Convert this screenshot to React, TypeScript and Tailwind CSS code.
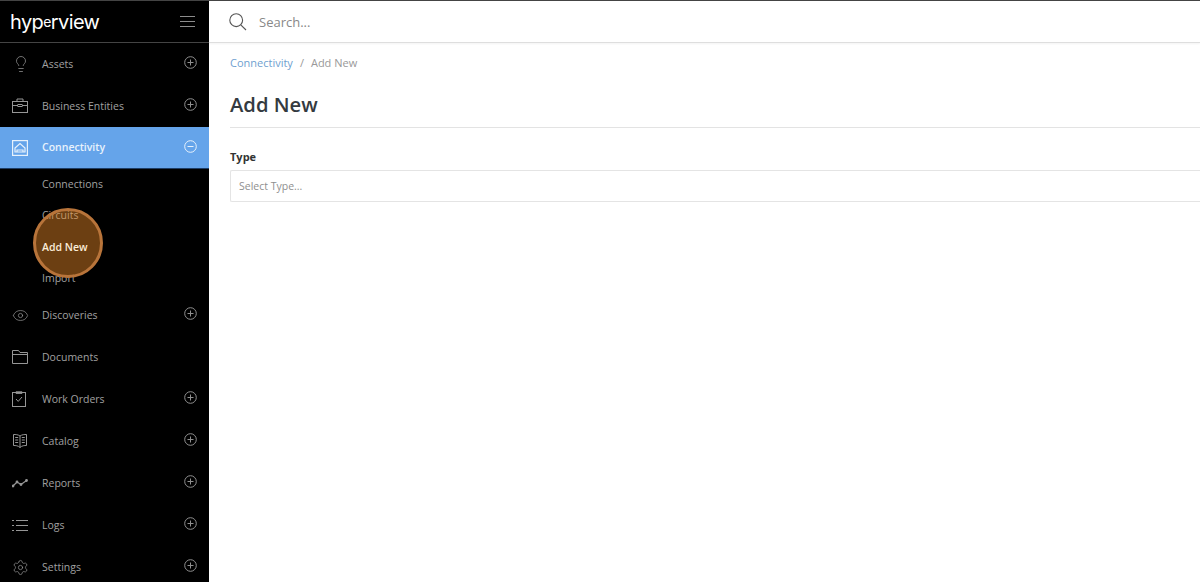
import * as React from "react";
import { Lightbulb, Eye, Settings } from "lucide-react";

const PlusCircle = ({ minus = false }: { minus?: boolean }) => (
  <svg width="13" height="13" viewBox="0 0 13 13" fill="none" stroke="currentColor" strokeWidth="1">
    <circle cx="6.5" cy="6.5" r="5.8" />
    <path d="M3.5 6.5h6" />
    {!minus && <path d="M6.5 3.500v6" />}
  </svg>
);

const Hamburger = () => (
  <svg width="15" height="11" viewBox="0 0 15 11" fill="none" stroke="#8c8c8c" strokeWidth="1">
    <path d="M0 0.500h15M0 5.500h15M0 10.500h15" />
  </svg>
);

const Briefcase = () => (
  <svg width="16" height="16" viewBox="0 0 16 16" fill="none" stroke="currentColor" strokeWidth="1">
    <rect x="0.5" y="3.5" width="15" height="11" />
    <path d="M5 3.5V1h6v2.5M0.5 7.500H6M10 7.500h5.500" />
    <rect x="6" y="6.500" width="4" height="2" />
  </svg>
);

const Network = () => (
  <svg width="16" height="16" viewBox="0 0 16 16" fill="none" stroke="currentColor" strokeWidth="1.2">
    <rect x="0.6" y="0.6" width="14.8" height="14.8" />
    <path d="M3 12V8l5-4.500L13 8v4z" />
    <path d="M5 12v-2h6v2" />
  </svg>
);

const FolderIcon = () => (
  <svg width="16" height="14" viewBox="0 0 16 14" fill="none" stroke="currentColor" strokeWidth="1">
    <path d="M0.500 13.500V0.500h6l1.500 2h7.500v11zM0.500 4.500h15" />
  </svg>
);

const Clipboard = () => (
  <svg width="14" height="16" viewBox="0 0 14 16" fill="none" stroke="currentColor" strokeWidth="1">
    <rect x="0.5" y="1.5" width="13" height="14" />
    <path d="M4 0.800h6v1.600H4zM4 8l2.200 2.400L10 6" />
  </svg>
);

const Book = () => (
  <svg width="16" height="16" viewBox="0 0 16 16" fill="none" stroke="currentColor" strokeWidth="1">
    <path d="M8 3C6 1.500 3.500 1.500 1.500 1.500v11c2 0 4.500 0 6.500 2 2-2 4.500-2 6.500-2v-11C12.500 1.500 10 1.500 8 3zM8 3v11.500" />
    <path d="M3.200 4.500h3M3.200 7h3M3.200 9.500h3M9.800 4.500h3M9.800 7h3M9.800 9.500h3" />
  </svg>
);

const Trend = () => (
  <svg width="16" height="16" viewBox="0 0 16 16" fill="none" stroke="currentColor" strokeWidth="1.200">
    <path d="M1 11 5 7l4 2.500 5.500-4" />
    <circle cx="1" cy="11" r="0.800" fill="currentColor" />
    <circle cx="5" cy="7" r="0.800" fill="currentColor" />
    <circle cx="9" cy="9.500" r="0.800" fill="currentColor" />
    <circle cx="14.500" cy="5.500" r="0.800" fill="currentColor" />
  </svg>
);

const Lines = () => (
  <svg width="16" height="11" viewBox="0 0 16 11" fill="none" stroke="currentColor" strokeWidth="1">
    <path d="M4 0.500h12M4 5.500h12M4 10.500h12M0 0.500h2M0 5.500h2M0 10.500h2" />
  </svg>
);

const SearchIcon = () => (
  <svg width="18" height="18" viewBox="0 0 18 18" fill="none" stroke="#555" strokeWidth="1.100" className="mt-[1px]">
    <circle cx="7.200" cy="7.200" r="6.400" />
    <path d="M11.800 11.800 17 17" />
  </svg>
);

const Row = ({ icon, label, plus = true }: { icon: React.ReactNode; label: string; plus?: boolean }) => (
  <div className="h-[42px] flex-shrink-0 flex items-center text-[#a0a0a0]">
    <div className="w-[42px] pl-[12px] flex justify-start text-[#969696]">{icon}</div>
    <span className="flex-1 text-[10.5px] leading-[14px] -mt-[1px]">{label}</span>
    {plus && (
      <div className="pr-[12px] -mt-[3px] text-[#909090]">
        <PlusCircle />
      </div>
    )}
  </div>
);

const SubItem = ({ label, active = false }: { label: string; active?: boolean }) => (
  <div className={`relative h-[31.25px] flex items-center pl-[42px] text-[10.5px] ${active ? "z-10 pt-[1px] text-[#fbecd8] font-semibold" : "text-[#a0a0a0]"}`}>
    {label}
  </div>
);

export default function App() {
  return (
    <div className="w-[1200px] h-[582px] flex overflow-hidden bg-white font-['Open_Sans',sans-serif]">
      {/* Sidebar */}
      <div className="relative w-[209px] flex-shrink-0 bg-black flex flex-col overflow-hidden border-t border-[#444]">
        <div className="h-[42px] flex-shrink-0 flex items-center justify-between pl-[10px] pr-[14px] border-b border-[#444]">
          <span className="text-white text-[20px] leading-none font-['Inter',sans-serif] font-normal tracking-[-0.6px]">
            hyp<span className="relative -top-[2px] text-[14px]">e</span>rview
          </span>
          <Hamburger />
        </div>

        <Row icon={<Lightbulb size={18} strokeWidth={1} />} label="Assets" />
        <Row icon={<Briefcase />} label="Business Entities" />

        <div className="h-[42px] flex-shrink-0 flex items-center bg-[#65a4ea] text-[#e8f2fc] border-b border-[#1d3d66]">
          <div className="w-[42px] pl-[12px]">
            <Network />
          </div>
          <span className="flex-1 text-[10.5px] font-semibold">Connectivity</span>
          <div className="pr-[12px] -mt-[2px]">
            <PlusCircle minus />
          </div>
        </div>

        <div className="flex-shrink-0">
          <SubItem label="Connections" />
          <SubItem label="Circuits" />
          <SubItem label="Add New" active />
          <SubItem label="Import" />
        </div>

        <Row icon={<Eye size={17} strokeWidth={1} />} label="Discoveries" />
        <Row icon={<FolderIcon />} label="Documents" plus={false} />
        <Row icon={<Clipboard />} label="Work Orders" />
        <Row icon={<Book />} label="Catalog" />
        <Row icon={<Trend />} label="Reports" />
        <Row icon={<Lines />} label="Logs" />
        <Row icon={<Settings size={17} strokeWidth={1} />} label="Settings" />

        {/* highlight marker */}
        <div className="absolute left-[33px] top-[207px] w-[70px] h-[70px] rounded-full bg-[#f08c28]/45 border-[3px] border-[#b8743a] pointer-events-none" />
      </div>

      {/* Main */}
      <div className="flex-1 flex flex-col min-w-0 border-t border-[#444]">
        <div className="h-[42px] flex-shrink-0 flex items-center pl-[20px] border-b border-[#dedede] shadow-[0_1px_2px_rgba(0,0,0,0.05)]">
          <SearchIcon />
          <span className="ml-[12px] mt-[2px] text-[13px] text-[#888]">Search...</span>
        </div>
        <div className="pl-[21px]">
          <div className="mt-[12px] flex items-center text-[11px] leading-[16px]">
            <span className="text-[#6f9fd0]">Connectivity</span>
            <span className="mx-[7px] text-[#999]">/</span>
            <span className="text-[#999]">Add New</span>
          </div>
          <div className="mt-[19px] text-[20.2px] leading-[28px] font-semibold text-[#343a40]">Add New</div>
          <div className="mt-[9px] border-t border-[#e3e3e3]" />
          <div className="mt-[21px] text-[11px] leading-[16px] font-bold text-[#333]">Type</div>
          <div className="mt-[5px] h-[32px] flex items-center pl-[8px] pt-[1px] text-[10.5px] text-[#8f8f8f] bg-white border border-[#e4e4e4] rounded-l-[2px] border-r-0">
            Select Type...
          </div>
        </div>
      </div>
    </div>
  );
}
